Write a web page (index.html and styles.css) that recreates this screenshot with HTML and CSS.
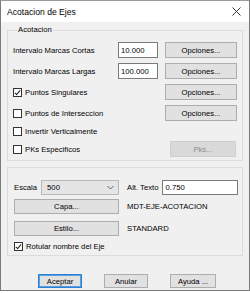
FILE: index.html
```html
<!DOCTYPE html>
<html lang="es">
<head>
  <meta charset="UTF-8" />
  <title>Acotacion de Ejes</title>
  <link rel="stylesheet" href="styles.css">
</head>
<body>

<div class="dialog">
  <div class="titlebar">
    <span class="title">Acotacion de Ejes</span>
    <svg class="close" width="9" height="9" viewBox="0 0 9 9"><path d="M0.5 0.5L8.5 8.5M8.5 0.5L0.5 8.5" /></svg>
  </div>

  <div class="client">
    <fieldset class="group">
      <legend>Acotacion</legend>
      <div class="rows">
        <span class="lbl">Intervalo Marcas Cortas</span>
        <input class="field" type="text" value="10.000">
        <button class="btn" type="button">Opciones...</button>

        <span class="lbl">Intervalo Marcas Largas</span>
        <input class="field" type="text" value="100.000">
        <button class="btn" type="button">Opciones...</button>

        <label class="check wide"><span class="box on"></span>Puntos Singulares</label>
        <button class="btn" type="button">Opciones...</button>

        <label class="check wide"><span class="box"></span>Puntos de Interseccion</label>
        <button class="btn" type="button">Opciones...</button>

        <label class="check wide"><span class="box"></span>Invertir Verticalmente</label>
        <span class="short"></span>

        <label class="check wide"><span class="box"></span>PKs Especificos</label>
        <button class="btn pks" type="button" disabled>Pks...</button>
      </div>
    </fieldset>

    <fieldset class="group group2">
      <div class="estilo">
        <div class="escala">
          <span>Escala</span>
          <div class="combo">500<svg width="7" height="5" viewBox="0 0 7 5"><path d="M0.5 1L3.5 4L6.5 1" /></svg></div>
        </div>
        <div class="alt">
          <span>Alt. Texto</span>
          <input class="field" type="text" value="0.750">
        </div>

        <button class="btn" type="button">Capa...</button>
        <span class="val">MDT-EJE-ACOTACION</span>

        <button class="btn estilo-btn" type="button">Estilo...</button>
        <span class="val estilo-val">STANDARD</span>

        <label class="check rotular"><span class="box on"></span>Rotular nombre del Eje</label>
      </div>
    </fieldset>

    <div class="actions">
      <button class="btn default" type="button">Aceptar</button>
      <button class="btn" type="button">Anular</button>
      <button class="btn ayuda" type="button">Ayuda ...</button>
    </div>
  </div>
</div>

</body>
</html>
```

FILE: styles.css
```css
/* dialogo estilo Windows, escalado */
body {
  margin: 0;
  background: #fff;
  font-family: 'Liberation Sans', Arial, sans-serif;
  font-size: 7.7px;
  color: #000;
}

.dialog {
  width: 250px;
  height: 291px;
  box-sizing: border-box;
  border: 1px solid #7a7a7a;
  border-top-color: #9a9a9a;
  background: #f0f0f0;
  display: flex;
  flex-direction: column;
}

.titlebar {
  height: 21px;
  flex: none;
  background: #fff;
  display: flex;
  align-items: center;
  justify-content: space-between;
  padding: 0 8px 0 6px;
}

.title {
  font-size: 8.6px;
}

.close path {
  stroke: #222;
  stroke-width: 0.9;
  fill: none;
}

.client {
  padding: 3px 6px 0 6px;
}

.group {
  margin: 0;
  padding: 7px 5px 3px 5px;
  border: 1px solid #dcdcdc;
  min-width: 0;
}

.group legend {
  padding: 0 1px;
  margin-left: 4px;
  line-height: 10px;
}

.rows {
  display: grid;
  grid-template-columns: 105px 40px 1fr;
  grid-template-rows: 16px 16px 16px 16px 10px 16px;
  row-gap: 5px;
  align-items: center;
  white-space: nowrap;
}

input.field {
  box-sizing: border-box;
  width: 40px;
  min-width: 0;
  height: 16px;
  margin: 0;
  padding: 0 2px;
  border: 1px solid #7a7a7a;
  background: #fff;
  font: inherit;
  color: #000;
  outline: none;
}

.btn {
  box-sizing: border-box;
  height: 16px;
  margin: 0;
  padding: 0;
  background: #e1e1e1;
  border: 1px solid #adadad;
  font: inherit;
  color: #000;
}

.rows .btn {
  width: 72px;
  justify-self: end;
}

.rows .btn.pks {
  width: 66px;
  margin-right: 1px;
  background: #d9d9d9;
  border-color: #cfcfcf;
  color: #8c8c8c;
}

.check {
  display: flex;
  align-items: center;
  gap: 3px;
  white-space: nowrap;
}

.check.wide {
  grid-column: 1 / 3;
}

.short {
  grid-column: 3;
}

.box {
  width: 9px;
  height: 9px;
  box-sizing: border-box;
  border: 1px solid #333;
  background: #fff;
  position: relative;
}

.box.on::after {
  content: '';
  position: absolute;
  left: 2px;
  top: 0;
  width: 2px;
  height: 5px;
  border: solid #222;
  border-width: 0 1px 1px 0;
  transform: rotate(40deg);
}

.group2 {
  margin-top: 6px;
  padding: 12px 4px 4px 6px;
}

.estilo {
  display: grid;
  grid-template-columns: 105px 1fr;
  column-gap: 8px;
  align-items: center;
  white-space: nowrap;
}

.escala {
  display: flex;
  align-items: center;
  gap: 4px;
  height: 15px;
}

.combo {
  flex: 1;
  height: 15px;
  box-sizing: border-box;
  background: #e5e5e5;
  border: 1px solid #b9b9b9;
  display: flex;
  align-items: center;
  justify-content: space-between;
  padding: 0 4px 0 5px;
}

.combo path {
  stroke: #555;
  stroke-width: 0.9;
  fill: none;
}

.alt {
  display: flex;
  align-items: center;
  gap: 4px;
  height: 15px;
}

.alt .field {
  flex: 1;
  width: 0;
  height: 15px;
}

.estilo .btn {
  height: 15px;
  margin-top: 4px;
}

.estilo .estilo-btn {
  margin-top: 7px;
}

.val {
  margin-top: 4px;
}

.val.estilo-val {
  margin-top: 7px;
}

.rotular {
  grid-column: 1 / 3;
  margin-top: 5px;
  height: 10px;
}

.actions {
  display: flex;
  gap: 22px;
  padding: 18px 0 0 31px;
}

.actions .btn {
  width: 44px;
  height: 14px;
}

.actions .btn.ayuda {
  width: 46px;
}

.actions .btn.default {
  border-color: #2b7fd3;
  box-shadow: inset 0 0 0 1px #5a9fe0;
}
```
